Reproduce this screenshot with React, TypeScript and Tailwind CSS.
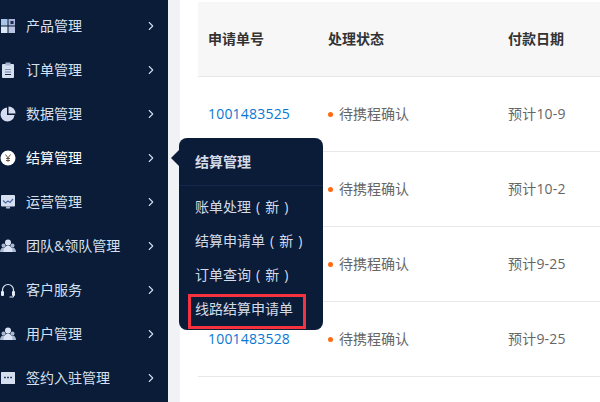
import { ChevronRight } from "lucide-react";
import { ReactNode } from "react";

const cjk = `font-['Open_Sans','Noto_Sans_CJK_SC',sans-serif]`;

const icons: Record<string, ReactNode> = {
  product: (
    <>
      <rect x="1" y="1" width="6.5" height="6.5" fill="#a9c4e8" />
      <rect x="8.500" y="1" width="6.500" height="6.500" fill="#aab4d8" />
      <rect x="10.500" y="3" width="3" height="3" fill="#1a2b4d" />
      <rect x="1" y="8.500" width="6.500" height="6.500" fill="#dbe6f6" />
      <rect x="8.500" y="8.500" width="6.500" height="6.500" fill="#b9c3e2" />
    </>
  ),
  order: (
    <>
      <rect x="2" y="2" width="12" height="14" rx="1" fill="#d5dff0" />
      <rect x="5.500" y="0.500" width="5" height="3" fill="#a6b4d0" />
      <path d="M5 7.500h6" stroke="#8894b4" strokeWidth="1" />
      <path d="M5 10h6" stroke="#6f80b0" strokeWidth="1" />
      <path d="M5 12.500h6" stroke="#1a2b4d" strokeWidth="1" />
    </>
  ),
  data: (
    <>
      <path d="M7 1.500a7 7 0 1 0 7.500 7.500H7z" fill="#d5dcf0" />
      <path d="M8.500 0.500a7 7 0 0 1 7 7h-7z" fill="#d5dcf0" />
    </>
  ),
  settle: (
    <>
      <circle cx="8" cy="8" r="7.500" fill="#fff" />
      <path d="M5.500 4.500 8 8l2.500-3.500M8 8v4M6 8.500h4M6 10.500h4" stroke="#6b5a45" strokeWidth="1" fill="none" />
    </>
  ),
  ops: (
    <>
      <rect x="1" y="1" width="14" height="11.500" rx="1" fill="#d5dff0" />
      <path d="M3 6.500 5.500 9 8 7l2 1.500L13 5" stroke="#4f6aa8" strokeWidth="1.200" fill="none" />
      <rect x="6" y="12.500" width="4" height="2" fill="#aab8d2" />
    </>
  ),
  team: (
    <>
      <circle cx="3.500" cy="7.500" r="2" fill="#aab8d2" />
      <circle cx="12.500" cy="7.500" r="2" fill="#aab8d2" />
      <path d="M0 14c0-2.500 1.500-4.500 3.500-4.500S7 11.500 7 14zM9 14c0-2.500 1.500-4.500 3.500-4.500S16 11.500 16 14z" fill="#aab8d2" />
      <circle cx="8" cy="4.500" r="3" fill="#dbe4f4" />
      <path d="M3.500 14c0-4 2-6.500 4.500-6.500s4.500 2.500 4.500 6.500z" fill="#dbe4f4" />
    </>
  ),
  service: (
    <>
      <path d="M2.500 10V8a5.500 5.500 0 0 1 11 0v2" stroke="#e4eaf5" strokeWidth="1.200" fill="none" />
      <rect x="1" y="9" width="3" height="5" rx="1" fill="#e4eaf5" />
      <rect x="12" y="9" width="3" height="5" rx="1" fill="#e4eaf5" />
      <path d="M13.500 14v1H9.500" stroke="#e4eaf5" strokeWidth="1" fill="none" />
    </>
  ),
  sign: (
    <>
      <rect x="1" y="2" width="14" height="12" rx="0.500" fill="#d5dff0" />
      <path d="M4 7.500h1.800M7.100 7.500h1.800M10.200 7.500H12" stroke="#25365a" strokeWidth="1.600" />
    </>
  ),
};

const navItems = [
  { label: "产品管理", icon: "product" },
  { label: "订单管理", icon: "order" },
  { label: "数据管理", icon: "data" },
  { label: "结算管理", icon: "settle", active: true },
  { label: "运营管理", icon: "ops" },
  { label: "团队&领队管理", icon: "team" },
  { label: "客户服务", icon: "service" },
  { label: "用户管理", icon: "team" },
  { label: "签约入驻管理", icon: "sign" },
];

const rows = [
  { id: "1001483525", date: "预计10-9" },
  { id: "", date: "预计10-2" },
  { id: "", date: "预计9-25" },
  { id: "1001483528", date: "预计9-25" },
];

const subItems = [
  { label: "账单处理", isNew: true },
  { label: "结算申请单", isNew: true },
  { label: "订单查询", isNew: true },
  { label: "线路结算申请单", isNew: false },
];

const App = () => {
  return (
    <div className={`relative flex h-[402px] w-[600px] overflow-hidden bg-white text-sm ${cjk}`}>
      <aside className="w-[168px] shrink-0 bg-[#0a1c38] pt-[4px]">
        {navItems.map((item) => (
          <div
            key={item.label}
            className={`flex h-[44px] items-center ${item.active ? "text-white" : "text-[#d6e0f0]"}`}
          >
            <svg width="16" height="16" viewBox="0 0 16 16" className="shrink-0">
              {icons[item.icon]}
            </svg>
            <span className="ml-[10px] flex-1 whitespace-nowrap">{item.label}</span>
            <ChevronRight size={14} strokeWidth={1.9} className="mr-[10px] text-[#d0dbee]" />
          </div>
        ))}
      </aside>
      <div className="w-[12px] shrink-0 bg-[#f1f2f6]" />
      <main className="flex-1 pl-[18px] pt-[2px]">
        <div className="grid h-[75px] grid-cols-[120px_180px_1fr] items-center border-b border-[#e8e8e8] bg-[#f7f7f7] pl-[10px] font-bold text-[#333]">
          <span>申请单号</span>
          <span>处理状态</span>
          <span>付款日期</span>
        </div>
        {rows.map((row, i) => (
          <div
            key={i}
            className="grid h-[75px] grid-cols-[120px_180px_1fr] items-center border-b border-[#e8e8e8] pl-[10px] text-[#666]"
          >
            <span className="tracking-[0.2px] text-[#0a78d2]">{row.id}</span>
            <span className="flex items-center">
              <span className="mr-[6px] h-[5px] w-[5px] rounded-full bg-[#ff6a13]" />
              待携程确认
            </span>
            <span className="tracking-[0.2px]">{row.date}</span>
          </div>
        ))}
      </main>

      <div className="absolute left-[179px] top-[138px] h-[192px] w-[144px] rounded-[8px] bg-[#0a1c38] text-[#d3dbe8]">
        <div className="absolute left-[-8px] top-[12px] h-0 w-0 border-y-[8px] border-r-[8px] border-y-transparent border-r-[#0a1c38]" />
        <div className="flex h-[48px] items-center border-b border-[#14274a] pl-[16px] font-bold">
          结算管理
        </div>
        <div className="pt-[4px]">
          {subItems.map((item) => (
            <div key={item.label} className="flex h-[34px] items-center whitespace-nowrap pl-[16px]">
              {item.label}
              {item.isNew && (
                <>
                  <span className="mx-[5px]">(</span>新<span className="mx-[5px]">)</span>
                </>
              )}
            </div>
          ))}
        </div>
        <div className="absolute left-[9px] top-[156px] h-[35px] w-[118px] border-[3px] border-[#f5333f]" />
      </div>
    </div>
  );
};

export default App;
